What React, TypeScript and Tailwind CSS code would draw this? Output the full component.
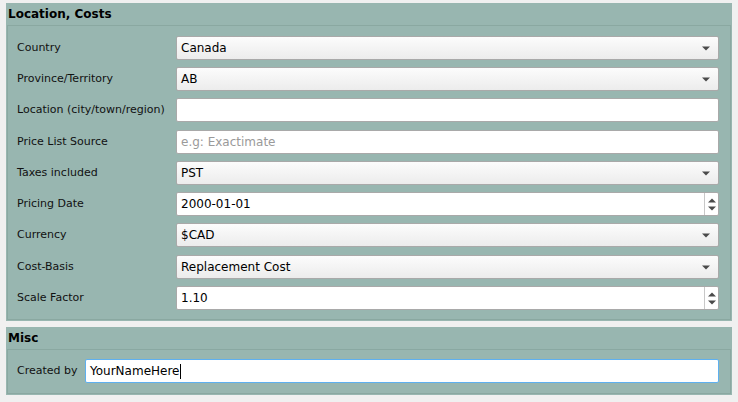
import React from 'react';

const font = { fontFamily: '"DejaVu Sans", Verdana, sans-serif' };

type Kind = 'select' | 'text' | 'spin';

interface Field {
  label: string;
  kind: Kind;
  value?: string;
  placeholder?: string;
  extra?: boolean;
}

const fields: Field[] = [
  { label: 'Country', kind: 'select', value: 'Canada' },
  { label: 'Province/Territory', kind: 'select', value: 'AB' },
  { label: 'Location (city/town/region)', kind: 'text', value: '' },
  { label: 'Price List Source', kind: 'text', placeholder: 'e.g: Exactimate', extra: true },
  { label: 'Taxes included', kind: 'select', value: 'PST' },
  { label: 'Pricing Date', kind: 'spin', value: '2000-01-01' },
  { label: 'Currency', kind: 'select', value: '$CAD' },
  { label: 'Cost-Basis', kind: 'select', value: 'Replacement Cost', extra: true },
  { label: 'Scale Factor', kind: 'spin', value: '1.10' },
];

function DownArrow() {
  return (
    <svg width="8" height="5" viewBox="0 0 8 5" className="shrink-0">
      <path d="M0 0.5 L8 0.5 L4 4.5 Z" fill="#4a4a4a" />
    </svg>
  );
}

function Control({ f }: { f: Field }) {
  if (f.kind === 'select') {
    return (
      <div className="flex-1 h-[24px] flex items-center justify-between pl-[4px] pr-[8px] rounded-[2px] border border-[#a9a9a9] bg-gradient-to-b from-[#fcfcfc] to-[#ececec] text-[12px] text-black">
        <span>{f.value}</span>
        <DownArrow />
      </div>
    );
  }
  if (f.kind === 'spin') {
    return (
      <div className="flex-1 h-[24px] flex items-stretch rounded-[2px] border border-[#a9a9a9] bg-white text-[12px] text-black">
        <span className="flex-1 flex items-center pl-[4px]">{f.value}</span>
        <div className="w-[14px] border-l border-[#c8c8c8] flex flex-col items-center justify-center gap-[3px]">
          <svg width="8" height="5" viewBox="0 0 8 5">
            <path d="M0 4.5 L8 4.5 L4 0.5 Z" fill="#4a4a4a" />
          </svg>
          <svg width="8" height="5" viewBox="0 0 8 5">
            <path d="M0 0.5 L8 0.5 L4 4.5 Z" fill="#4a4a4a" />
          </svg>
        </div>
      </div>
    );
  }
  return (
    <div className="flex-1 h-[24px] flex items-center pl-[4px] rounded-[2px] border border-[#a9a9a9] bg-white text-[12px] text-black">
      {f.placeholder ? <span className="text-[#9a9a9a]">{f.placeholder}</span> : f.value}
    </div>
  );
}

function Panel({ title, children }: { title: string; children: React.ReactNode }) {
  return (
    <div className="bg-[#98b6b0] px-px pb-px">
      <div className="h-[22px] flex items-center px-[1px] text-[12px] font-bold text-black">{title}</div>
      <div className="border border-[#8aa8a1]">{children}</div>
    </div>
  );
}

export default function App() {
  return (
    <div className="w-[738px] h-[402px] bg-[#f0f0f0] pt-[3px] px-[6px] flex flex-col gap-[6px]" style={font}>
      <Panel title="Location, Costs">
        <div className="flex flex-col gap-[7px] pl-[9px] pr-[11px] pt-[10px] pb-[9px]">
          {fields.map((f) => (
            <div key={f.label} className={`flex items-center ${f.extra ? 'mt-px' : ''}`}>
              <span className="w-[159px] shrink-0 text-[11px] text-[#111]">{f.label}</span>
              <Control f={f} />
            </div>
          ))}
        </div>
      </Panel>
      <Panel title="Misc">
        <div className="flex items-center pl-[9px] pr-[11px] pt-[9px] pb-[10px]">
          <span className="w-[68px] shrink-0 text-[11px] text-[#111]">Created by</span>
          <div className="flex-1 h-[24px] flex items-center pl-[4px] rounded-[2px] border border-[#5eb0f0] bg-white text-[12px] text-black">
            YourNameHere
            <span className="inline-block w-px h-[15px] bg-black ml-px" />
          </div>
        </div>
      </Panel>
    </div>
  );
}
